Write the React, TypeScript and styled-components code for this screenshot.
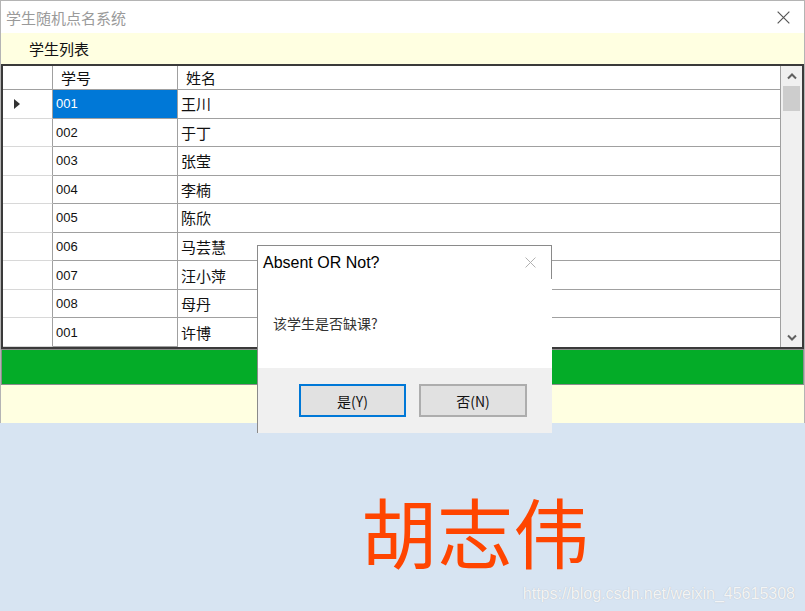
import * as React from 'react';
import styled, { createGlobalStyle } from 'styled-components';

const GlobalStyle = createGlobalStyle`
  html, body {
    margin: 0;
    padding: 0;
    background: #ffffff;
  }
  body {
    font-family: "Noto Sans CJK SC", "Liberation Sans", sans-serif;
  }
`;

const cjk = `"Noto Sans CJK SC", "Noto Sans", sans-serif`;

const students = [
  { id: '001', name: '王川' },
  { id: '002', name: '于丁' },
  { id: '003', name: '张莹' },
  { id: '004', name: '李楠' },
  { id: '005', name: '陈欣' },
  { id: '006', name: '马芸慧' },
  { id: '007', name: '汪小萍' },
  { id: '008', name: '母丹' },
  { id: '001', name: '许博' },
];

const Window = styled.div`
  position: relative;
  width: 805px;
  height: 611px;
  overflow: hidden;
  display: flex;
  flex-direction: column;
`;

const Frame = styled.div`
  display: flex;
  flex-direction: column;
  border-left: 1px solid #b4b4b4;
  border-right: 1px solid #b4b4b4;
`;

const TitleBar = styled.div`
  height: 33px;
  box-sizing: border-box;
  border-top: 1px solid #b4b4b4;
  display: flex;
  align-items: center;
  justify-content: space-between;
  padding: 0 14px 0 5px;
  background: #ffffff;
`;

const TitleText = styled.span`
  font-family: ${cjk};
  font-size: 15px;
  color: #9a9a9a;
`;

const ListHeader = styled.div`
  height: 31px;
  background: #ffffe1;
  display: flex;
  align-items: center;
  padding-left: 28px;
  font-family: ${cjk};
  font-size: 15px;
  color: #111;
`;

const GridBox = styled.div`
  height: 285px;
  box-sizing: border-box;
  border: 2px solid #3a3a3a;
  display: flex;
  background: #ffffff;
`;

const Table = styled.div`
  flex: 1;
  display: grid;
  grid-template-columns: 50px 125px 1fr;
  grid-template-rows: 24px repeat(9, 1fr);
  border-right: 1px solid #a0a0a0;
`;

const Cell = styled.div<{ $kind: 'rowhead' | 'id' | 'name'; $header?: boolean; $selected?: boolean }>`
  display: flex;
  align-items: center;
  box-sizing: border-box;
  border-bottom: 1px solid ${(p) => (p.$kind === 'rowhead' && !p.$header ? '#d8d8d8' : '#a0a0a0')};
  border-right: ${(p) => (p.$kind === 'name' ? 'none' : '1px solid #a0a0a0')};
  background: ${(p) => (p.$selected ? '#0078d7' : '#ffffff')};
  color: ${(p) => (p.$selected ? '#ffffff' : '#111')};
  padding-left: ${(p) => (p.$header ? '8px' : '3px')};
  font-family: ${(p) => (p.$kind === 'id' && !p.$header ? `"Liberation Sans", sans-serif` : cjk)};
  font-size: ${(p) => (p.$kind === 'id' && !p.$header ? '13px' : '15px')};
  &:last-child {
    border-bottom: none;
  }
`;

const RowArrow = styled.span`
  width: 0;
  height: 0;
  margin-left: 8px;
  border-top: 5px solid transparent;
  border-bottom: 5px solid transparent;
  border-left: 6px solid #333;
`;

const ScrollBar = styled.div`
  width: 21px;
  background: #f0f0f0;
  display: flex;
  flex-direction: column;
  align-items: center;
`;

const ScrollButton = styled.div`
  height: 20px;
  width: 100%;
  display: flex;
  align-items: center;
  justify-content: center;
`;

const ScrollThumb = styled.div`
  width: 17px;
  height: 25px;
  background: #cdcdcd;
`;

const ScrollTrack = styled.div`
  flex: 1;
`;

const GreenBar = styled.div`
  height: 36px;
  box-sizing: border-box;
  border: 1px solid #8c8c8c;
  background: #04ac28;
`;

const YellowBand = styled.div`
  height: 38px;
  background: #ffffe1;
`;

const BottomPanel = styled.div`
  flex: 1;
  background: #d7e4f2;
  display: flex;
  flex-direction: column;
`;

const BigName = styled.div`
  padding: 69px 0 0 361px;
  font-family: ${cjk};
  font-size: 76px;
  line-height: 1;
  color: #ff4500;
`;

const Watermark = styled.div`
  align-self: flex-end;
  margin: 17px 10px 0 0;
  font-family: "Liberation Sans", Arial, sans-serif;
  font-size: 16px;
  line-height: 18px;
  color: rgba(255, 255, 255, 0.85);
  text-shadow: 0 0 1px rgba(150, 150, 150, 0.6);
`;

const Dialog = styled.div`
  position: absolute;
  left: 257px;
  top: 245px;
  width: 295px;
  height: 188px;
  box-sizing: border-box;
  border-left: 1px solid #8a8a8a;
  border-top: 1px solid #8a8a8a;
  display: flex;
  flex-direction: column;
  background: #ffffff;
`;

const DialogTitle = styled.div`
  height: 33px;
  box-sizing: border-box;
  border-right: 1px solid #8a8a8a;
  display: flex;
  align-items: center;
  justify-content: space-between;
  padding: 0 15px 0 5px;
  font-family: "Liberation Sans", "Noto Sans", sans-serif;
  font-size: 16px;
  color: #000;
`;

const DialogBody = styled.div`
  flex: 1;
  display: flex;
  align-items: center;
  padding: 0 0 2px 15px;
  font-family: ${cjk};
  font-size: 14px;
  color: #333;
`;

const DialogFooter = styled.div`
  height: 65px;
  box-sizing: border-box;
  background: #f0f0f0;
  display: flex;
  align-items: flex-start;
  padding: 16px 0 0 41px;
  gap: 13px;
`;

const DialogButton = styled.button<{ $focused?: boolean }>`
  width: ${(p) => (p.$focused ? '107px' : '108px')};
  height: 33px;
  box-sizing: border-box;
  background: #e1e1e1;
  border: ${(p) => (p.$focused ? '2px solid #0078d7' : '2px solid #adadad')};
  font-family: ${cjk};
  font-size: 14px;
  color: #111;
  padding: 0;
`;

const CloseIcon = ({ size, color }: { size: number; color: string }) => (
  <svg width={size} height={size} viewBox="0 0 10 10">
    <path d="M0.5 0.5 L9.5 9.5 M9.5 0.5 L0.5 9.5" stroke={color} strokeWidth="0.9" fill="none" />
  </svg>
);

const Chevron = ({ down }: { down?: boolean }) => (
  <svg width="10" height="7" viewBox="0 0 10 7">
    <path
      d={down ? 'M1 1.5 L5 5.5 L9 1.5' : 'M1 5.5 L5 1.5 L9 5.5'}
      stroke="#606060"
      strokeWidth="2"
      fill="none"
    />
  </svg>
);

export default function App() {
  return (
    <>
      <GlobalStyle />
      <Window>
        <Frame>
          <TitleBar>
            <TitleText>学生随机点名系统</TitleText>
            <CloseIcon size={13} color="#555" />
          </TitleBar>
          <ListHeader>学生列表</ListHeader>
          <GridBox>
            <Table>
              <Cell $kind="rowhead" $header />
              <Cell $kind="id" $header>学号</Cell>
              <Cell $kind="name" $header>姓名</Cell>
              {students.map((s, i) => (
                <React.Fragment key={i}>
                  <Cell $kind="rowhead">{i === 0 && <RowArrow />}</Cell>
                  <Cell $kind="id" $selected={i === 0}>{s.id}</Cell>
                  <Cell $kind="name">{s.name}</Cell>
                </React.Fragment>
              ))}
            </Table>
            <ScrollBar>
              <ScrollButton><Chevron /></ScrollButton>
              <ScrollThumb />
              <ScrollTrack />
              <ScrollButton><Chevron down /></ScrollButton>
            </ScrollBar>
          </GridBox>
          <GreenBar />
          <YellowBand />
        </Frame>
        <BottomPanel>
          <BigName>胡志伟</BigName>
          <Watermark>https://blog.csdn.net/weixin_45615308</Watermark>
        </BottomPanel>
        <Dialog>
          <DialogTitle>
            <span>Absent OR Not?</span>
            <CloseIcon size={11} color="#b0b0b0" />
          </DialogTitle>
          <DialogBody>该学生是否缺课?</DialogBody>
          <DialogFooter>
            <DialogButton $focused>是(Y)</DialogButton>
            <DialogButton>否(N)</DialogButton>
          </DialogFooter>
        </Dialog>
      </Window>
    </>
  );
}
